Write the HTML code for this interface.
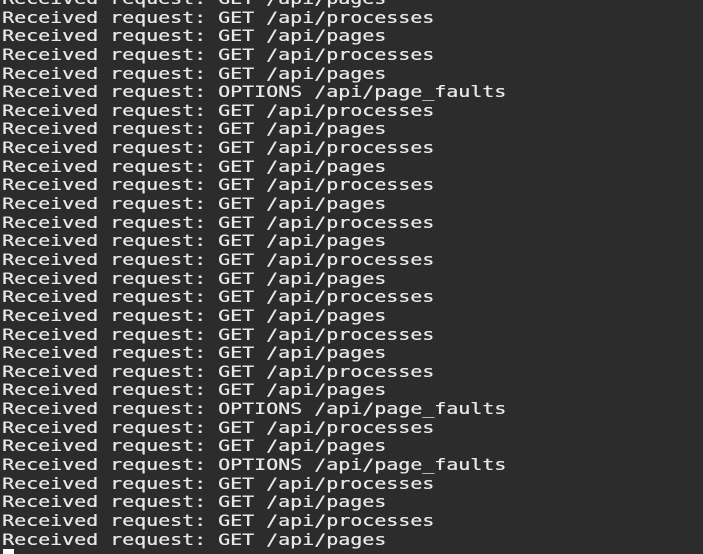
<!DOCTYPE html>
<html><head><style>
html,body{margin:0;padding:0;width:703px;height:554px;overflow:hidden;background:#2c2c2c;}
pre{position:absolute;left:2px;top:-10px;margin:0;font-family:"DejaVu Sans Mono","Liberation Mono",monospace;font-size:16px;font-weight:normal;line-height:18.64px;color:#e8e8e8;transform:scaleX(1.246);transform-origin:0 0;text-shadow:0.3px 0 0 #e8e8e8;}
.cur{position:absolute;left:3px;top:549px;width:11px;height:5px;background:#fff;}
</style></head><body>
<pre>Received request: GET /api/pages
Received request: GET /api/processes
Received request: GET /api/pages
Received request: GET /api/processes
Received request: GET /api/pages
Received request: OPTIONS /api/page_faults
Received request: GET /api/processes
Received request: GET /api/pages
Received request: GET /api/processes
Received request: GET /api/pages
Received request: GET /api/processes
Received request: GET /api/pages
Received request: GET /api/processes
Received request: GET /api/pages
Received request: GET /api/processes
Received request: GET /api/pages
Received request: GET /api/processes
Received request: GET /api/pages
Received request: GET /api/processes
Received request: GET /api/pages
Received request: GET /api/processes
Received request: GET /api/pages
Received request: OPTIONS /api/page_faults
Received request: GET /api/processes
Received request: GET /api/pages
Received request: OPTIONS /api/page_faults
Received request: GET /api/processes
Received request: GET /api/pages
Received request: GET /api/processes
Received request: GET /api/pages</pre>
<div class="cur"></div>
</body></html>
